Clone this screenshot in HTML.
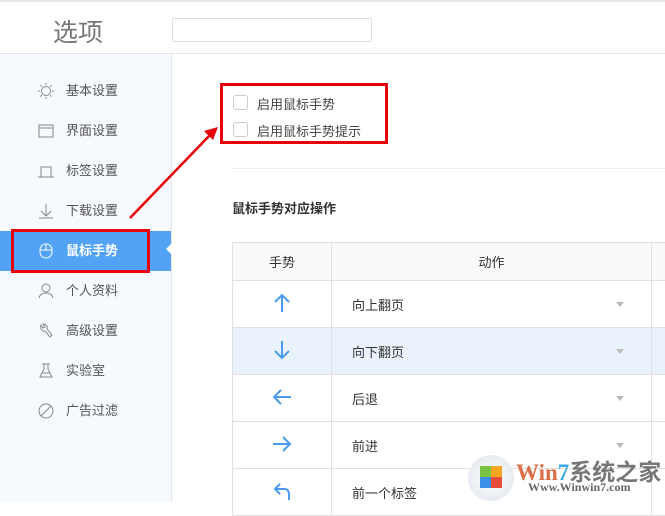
<!DOCTYPE html>
<html><head><meta charset="utf-8"><style>
*{margin:0;padding:0;box-sizing:border-box}
body{width:665px;height:502px;overflow:hidden;background:#fff;font-family:"Liberation Sans","Noto Sans CJK SC",sans-serif;position:relative;color:#333}
.top{position:absolute;left:0;top:0;width:665px;height:54px;border-top:2px solid #e6e6e6;border-bottom:1px solid #e4e8ee}
.title{position:absolute;left:53px;top:11px;font-size:25px;color:#777}
.search{position:absolute;left:172px;top:16px;width:200px;height:24px;border:1px solid #ddd;border-radius:2px}
.side{position:absolute;left:0;top:54px;width:172px;height:448px;background:#f6f9fd;border-right:1px solid #e3e8ee}
.item{position:absolute;left:0;width:171px;height:40px;font-size:13px;color:#555;line-height:40px;padding-left:66px}
.item svg{position:absolute;left:38px;top:12px}
.active{background:#52a3f5;color:#fff;font-weight:bold}
.red{position:absolute;border:3px solid #e8000b}
.tbl{position:absolute;left:232px;top:242px;width:440px;border-collapse:collapse;font-size:13px}
.tbl td{border:1px solid #e0e0e0;height:47px}
.tbl .h td{height:38px;background:#fafafa;text-align:center}
.c1{width:99px;text-align:center}
.c2{width:320px;padding-left:20px;position:relative}
.c2 i{position:absolute;right:27px;top:21px;border:4px solid transparent;border-top:5px solid #bbb}
.sel td{background:#eaf3fd}
.cb{position:absolute;left:233px;width:15px;height:15px;border:1px solid #ccc;border-radius:3px;background:#fff}
.lbl{position:absolute;left:257px;font-size:13px;color:#444}
</style></head><body>
<div class="top"><div class="title">选项</div><div class="search"></div></div>
<div class="side">
<div class="item" style="top:17px"><svg width="16" height="16" viewBox="0 0 16 16" fill="none" stroke="#888"><circle cx="8" cy="8" r="4.5"/><path d="M8 0v2M8 14v2M0 8h2M14 8h2M2.3 2.3l1.5 1.5M12.2 12.2l1.5 1.5M2.3 13.7l1.5-1.5M12.2 3.8l1.5-1.5"/></svg>基本设置</div>
<div class="item" style="top:57px"><svg width="16" height="16" fill="none" stroke="#888"><rect x="1" y="2" width="14" height="12"/><path d="M1 5h14"/></svg>界面设置</div>
<div class="item" style="top:97px"><svg width="16" height="16" fill="none" stroke="#888"><path d="M0 14h16M3 14V4h10v10"/></svg>标签设置</div>
<div class="item" style="top:137px"><svg width="16" height="16" fill="none" stroke="#888"><path d="M8 1v12M3 8l5 5 5-5M1 15h14"/></svg>下载设置</div>
<div class="item active" style="top:177px"><svg width="16" height="16" fill="none" stroke="#fff"><rect x="2" y="1" width="12" height="14" rx="6"/><path d="M2 7h12M8 1v6"/></svg>鼠标手势</div>
<div style="position:absolute;left:166px;top:189px;border:6px solid transparent;border-right:6px solid #fff;border-left:0"></div>
<div class="item" style="top:217px"><svg width="16" height="16" fill="none" stroke="#888"><circle cx="8" cy="5" r="4"/><path d="M1 15c1-4 4-5 7-5s6 1 7 5"/></svg>个人资料</div>
<div class="item" style="top:257px"><svg width="16" height="16" fill="none" stroke="#888"><path d="M3 2l2 3 2-1-2-3c3 0 5 2 4 5l5 6-2 2-5-6c-3 1-5-2-4-6z"/></svg>高级设置</div>
<div class="item" style="top:297px"><svg width="16" height="16" fill="none" stroke="#888"><path d="M4 1h8M6 1v5L2 14h12L10 6V1M4 10h8"/></svg>实验室</div>
<div class="item" style="top:337px"><svg width="16" height="16" fill="none" stroke="#888"><circle cx="8" cy="8" r="7"/><path d="M3 13L13 3"/></svg>广告过滤</div>
</div>
<div class="red" style="left:11px;top:229px;width:139px;height:44px"></div>
<div class="cb" style="top:95px"></div><div class="lbl" style="top:94px">启用鼠标手势</div>
<div class="cb" style="top:122px"></div><div class="lbl" style="top:121px">启用鼠标手势提示</div>
<div class="red" style="left:220px;top:83px;width:168px;height:61px"></div>
<div style="position:absolute;left:232px;top:168px;width:433px;height:1px;background:#eee"></div>
<div style="position:absolute;left:232px;top:198px;font-size:13px;font-weight:bold">鼠标手势对应操作</div>
<svg style="position:absolute;left:0;top:0" width="665" height="502"><path d="M130 218L210 135" stroke="#e8000b" stroke-width="2.5"/><path d="M218 127l-14 4 9 9z" fill="#e8000b"/></svg>
<table class="tbl">
<tr class="h"><td class="c1">手势</td><td>动作</td><td></td></tr>
<tr><td class="c1"><svg width="20" height="20" fill="none" stroke="#4a9bf0" stroke-width="2"><path d="M10 19V2M3 9l7-7 7 7"/></svg></td><td class="c2">向上翻页<i></i></td><td></td></tr>
<tr class="sel"><td class="c1"><svg width="20" height="20" fill="none" stroke="#4a9bf0" stroke-width="2"><path d="M10 1v17M3 11l7 7 7-7"/></svg></td><td class="c2">向下翻页<i></i></td><td></td></tr>
<tr><td class="c1"><svg width="20" height="20" fill="none" stroke="#4a9bf0" stroke-width="2"><path d="M19 10H2M9 3l-7 7 7 7"/></svg></td><td class="c2">后退<i></i></td><td></td></tr>
<tr><td class="c1"><svg width="20" height="20" fill="none" stroke="#4a9bf0" stroke-width="2"><path d="M1 10h17M11 3l7 7-7 7"/></svg></td><td class="c2">前进<i></i></td><td></td></tr>
<tr><td class="c1"><svg width="20" height="20" fill="none" stroke="#4a9bf0" stroke-width="2"><path d="M8 3L3 8l5 5M3 8h10c3 0 4 3 4 6v5"/></svg></td><td class="c2">前一个标签</td><td></td></tr>
</table>
<div style="position:absolute;left:468px;top:455px;width:46px;height:46px;border-radius:50%;background:radial-gradient(#fff,#dde3ea);"></div>
<div style="position:absolute;left:480px;top:466px;width:22px;height:22px;background:conic-gradient(#f5a623 0 25%,#e74c3c 25% 50%,#3a8ee6 50% 75%,#7cc242 75%)"></div>
<div style="position:absolute;left:516px;top:453px;font-size:23px;font-weight:bold;color:#d9704a;font-family:'Liberation Serif','Noto Sans CJK SC',serif">Win<span style="color:#3aa7e0">7</span><span style="color:#777">系统之家</span></div>
<div style="position:absolute;left:528px;top:480px;font-size:12px;font-weight:bold;color:#666;font-family:'Liberation Serif',serif">Www.Winwin7.com</div>
</body></html>
